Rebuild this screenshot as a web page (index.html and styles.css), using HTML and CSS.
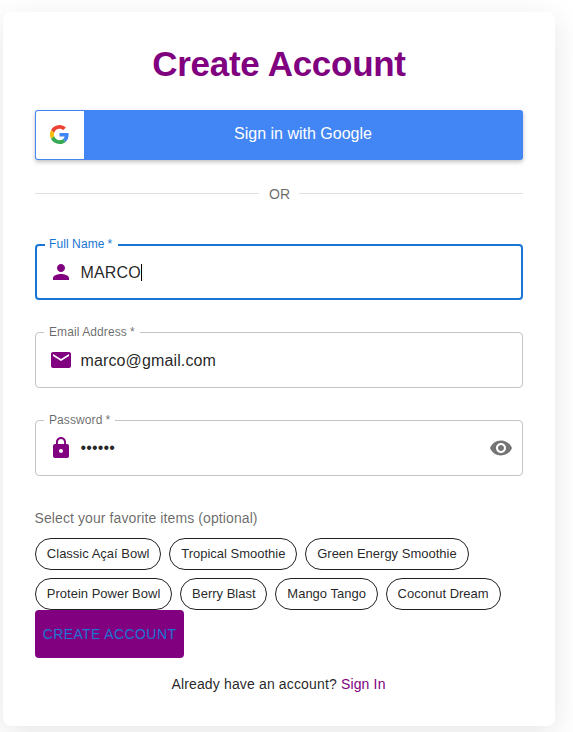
FILE: index.html
```html
<!DOCTYPE html>
<html lang="en">
<head>
<meta charset="utf-8">
<title>Create Account</title>
<link rel="stylesheet" href="styles.css">
</head>
<body>
<main class="card">
  <h1 class="title">Create Account</h1>
  <button class="google" type="button">
    <span class="google-icon">
      <svg width="19" height="19" viewBox="0 0 48 48"><path fill="#EA4335" d="M24 9.5c3.54 0 6.71 1.22 9.21 3.6l6.85-6.85C35.9 2.38 30.47 0 24 0 14.62 0 6.51 5.38 2.56 13.22l7.98 6.19C12.43 13.72 17.74 9.5 24 9.5z"/><path fill="#4285F4" d="M46.98 24.55c0-1.57-.15-3.09-.38-4.55H24v9.02h12.94c-.58 2.96-2.26 5.48-4.78 7.18l7.73 6c4.51-4.18 7.09-10.36 7.09-17.65z"/><path fill="#FBBC05" d="M10.53 28.59c-.48-1.45-.76-2.99-.76-4.59s.27-3.14.76-4.59l-7.98-6.19C.92 16.46 0 20.12 0 24c0 3.88.92 7.54 2.56 10.78l7.97-6.19z"/><path fill="#34A853" d="M24 48c6.48 0 11.93-2.13 15.89-5.81l-7.73-6c-2.15 1.45-4.92 2.3-8.16 2.3-6.26 0-11.57-4.22-13.47-9.91l-7.98 6.19C6.51 42.62 14.62 48 24 48z"/></svg>
    </span>
    <span class="google-text">Sign in with Google</span>
  </button>
  <div class="divider">OR</div>
  <form class="form">
    <div class="field focused">
      <span class="label">Full Name<i class="star">*</i></span>
      <svg class="icon" viewBox="0 0 24 24"><path d="M12 12c2.21 0 4-1.79 4-4s-1.79-4-4-4-4 1.79-4 4 1.79 4 4 4zm0 2c-2.67 0-8 1.34-8 4v2h16v-2c0-2.66-5.33-4-8-4z"/></svg>
      <span class="value">MARCO</span><span class="caret"></span>
    </div>
    <div class="field">
      <span class="label">Email Address<i class="star">*</i></span>
      <svg class="icon" viewBox="0 0 24 24"><path d="M20 4H4c-1.1 0-1.99.9-1.99 2L2 18c0 1.1.9 2 2 2h16c1.1 0 2-.9 2-2V6c0-1.1-.9-2-2-2zm0 4-8 5-8-5V6l8 5 8-5v2z"/></svg>
      <span class="value">marco@gmail.com</span>
    </div>
    <div class="field">
      <span class="label">Password<i class="star">*</i></span>
      <svg class="icon" viewBox="0 0 24 24"><path d="M18 8h-1V6c0-2.76-2.24-5-5-5S7 3.24 7 6v2H6c-1.1 0-2 .9-2 2v10c0 1.1.9 2 2 2h12c1.1 0 2-.9 2-2V10c0-1.1-.9-2-2-2zm-6 9c-1.1 0-2-.9-2-2s.9-2 2-2 2 .9 2 2-.9 2-2 2zm3.1-9H8.900V6c0-1.710 1.390-3.100 3.100-3.100 1.710 0 3.100 1.390 3.100 3.100v2z"/></svg>
      <span class="value dots">••••••</span>
      <svg class="icon eye" viewBox="0 0 24 24"><path d="M12 4.500C7 4.500 2.730 7.610 1 12c1.730 4.390 6 7.500 11 7.500s9.270-3.110 11-7.500c-1.730-4.390-6-7.500-11-7.500zM12 17c-2.760 0-5-2.240-5-5s2.240-5 5-5 5 2.240 5 5-2.240 5-5 5zm0-8c-1.660 0-3 1.340-3 3s1.340 3 3 3 3-1.340 3-3-1.340-3-3-3z"/></svg>
    </div>
  </form>
  <p class="hint">Select your favorite items (optional)</p>
  <div class="chips">
    <span class="chip">Classic Açaí Bowl</span>
    <span class="chip">Tropical Smoothie</span>
    <span class="chip">Green Energy Smoothie</span>
    <span class="chip">Protein Power Bowl</span>
    <span class="chip">Berry Blast</span>
    <span class="chip">Mango Tango</span>
    <span class="chip">Coconut Dream</span>
  </div>
  <button class="submit" type="button">CREATE ACCOUNT</button>
  <p class="footer">Already have an account? <a class="link">Sign In</a></p>
</main>
</body>
</html>
```
FILE: styles.css
```css
* {
  box-sizing: border-box;
}

body {
  margin: 0;
  padding: 12px 0 0 3px;
  height: 732px;
  overflow: hidden;
  background: #fff;
  color: rgba(0, 0, 0, 0.87);
  font-family: "Liberation Sans", Arial, sans-serif;
}

button {
  font-family: inherit;
  border: 0;
}

.card {
  width: 552px;
  height: 714px;
  padding: 31px 32px 32px;
  border-radius: 8px;
  background: #fff;
  box-shadow: 0 8px 32px rgba(0, 0, 0, 0.1);
}

.title {
  margin: 0 0 25px;
  font-size: 35px;
  line-height: 42px;
  letter-spacing: -0.28px;
  text-align: center;
  color: purple;
}

.google {
  display: flex;
  align-items: center;
  width: 100%;
  height: 50px;
  padding: 1px;
  border-radius: 3px;
  background: #4285f4;
  color: #fff;
  box-shadow: 0 2px 4px rgba(0, 0, 0, 0.25);
}

.google-icon {
  display: flex;
  align-items: center;
  justify-content: center;
  width: 48px;
  height: 48px;
  padding: 0 1px 1px 0;
  border-radius: 2px 0 0 2px;
  background: #fff;
}

.google-text {
  flex: 1;
  font-size: 16px;
  line-height: 20px;
  padding-bottom: 2px;
  text-align: center;
}

.divider {
  display: flex;
  align-items: center;
  gap: 10px;
  margin: 24px 0 40px;
  font-size: 14px;
  line-height: 20px;
  letter-spacing: 0.1px;
  color: rgba(0, 0, 0, 0.6);
}

/* The line sits one pixel above the middle of the text box. */
.divider::before,
.divider::after {
  content: "";
  flex: 1;
  height: 1px;
  margin-bottom: 1px;
  background: #e0e0e0;
}

.divider::after {
  margin-left: -1px;
}

.form {
  display: grid;
  gap: 32px;
}

.field {
  position: relative;
  display: flex;
  align-items: center;
  height: 56px;
  padding: 0 9px 0 13px;
  border: 1px solid #c4c4c4;
  border-radius: 4px;
}

.field.focused {
  padding: 0 8px 0 12px;
  border: 2px solid #1976d2;
}

.label {
  position: absolute;
  top: -9px;
  left: 8px;
  padding: 0 5px;
  background: #fff;
  font-size: 12px;
  line-height: 16px;
  letter-spacing: 0.09px;
  color: rgba(0, 0, 0, 0.6);
}

.focused .label {
  top: -10px;
  left: 8px;
  padding-left: 4px;
  padding-right: 6px;
  color: #1976d2;
}

.star {
  margin-left: 3px;
  font-style: normal;
}

.icon {
  width: 24px;
  height: 24px;
  margin-right: 7.5px;
  fill: purple;
}

.eye {
  margin: 0 0 0 auto;
  fill: #757575;
}

.value {
  font-size: 16px;
  line-height: 23px;
  letter-spacing: 0.13px;
}

.dots {
  padding-bottom: 1px;
}

.caret {
  width: 1px;
  height: 17px;
  background: #000;
}

.hint {
  margin: 32px 0 10px;
  font-size: 14px;
  line-height: 20px;
  letter-spacing: 0.1px;
  text-indent: -0.5px;
  color: rgba(0, 0, 0, 0.6);
}

.chips {
  display: flex;
  flex-wrap: wrap;
  gap: 8px;
}

.chip {
  height: 32px;
  padding: 0 10.87px;
  border: 1px solid #212121;
  border-radius: 16px;
  font-size: 13px;
  line-height: 30px;
}

.submit {
  display: block;
  width: 149px;
  height: 48px;
  padding: 0;
  border-radius: 4px;
  background: purple;
  color: #1976d2;
  font-size: 14px;
  letter-spacing: 0.4px;
  white-space: nowrap;
}

.footer {
  margin: 16px 0 0;
  padding-right: 1px;
  font-size: 14px;
  line-height: 20px;
  letter-spacing: 0.15px;
  text-align: center;
}

.link {
  color: purple;
}
```
